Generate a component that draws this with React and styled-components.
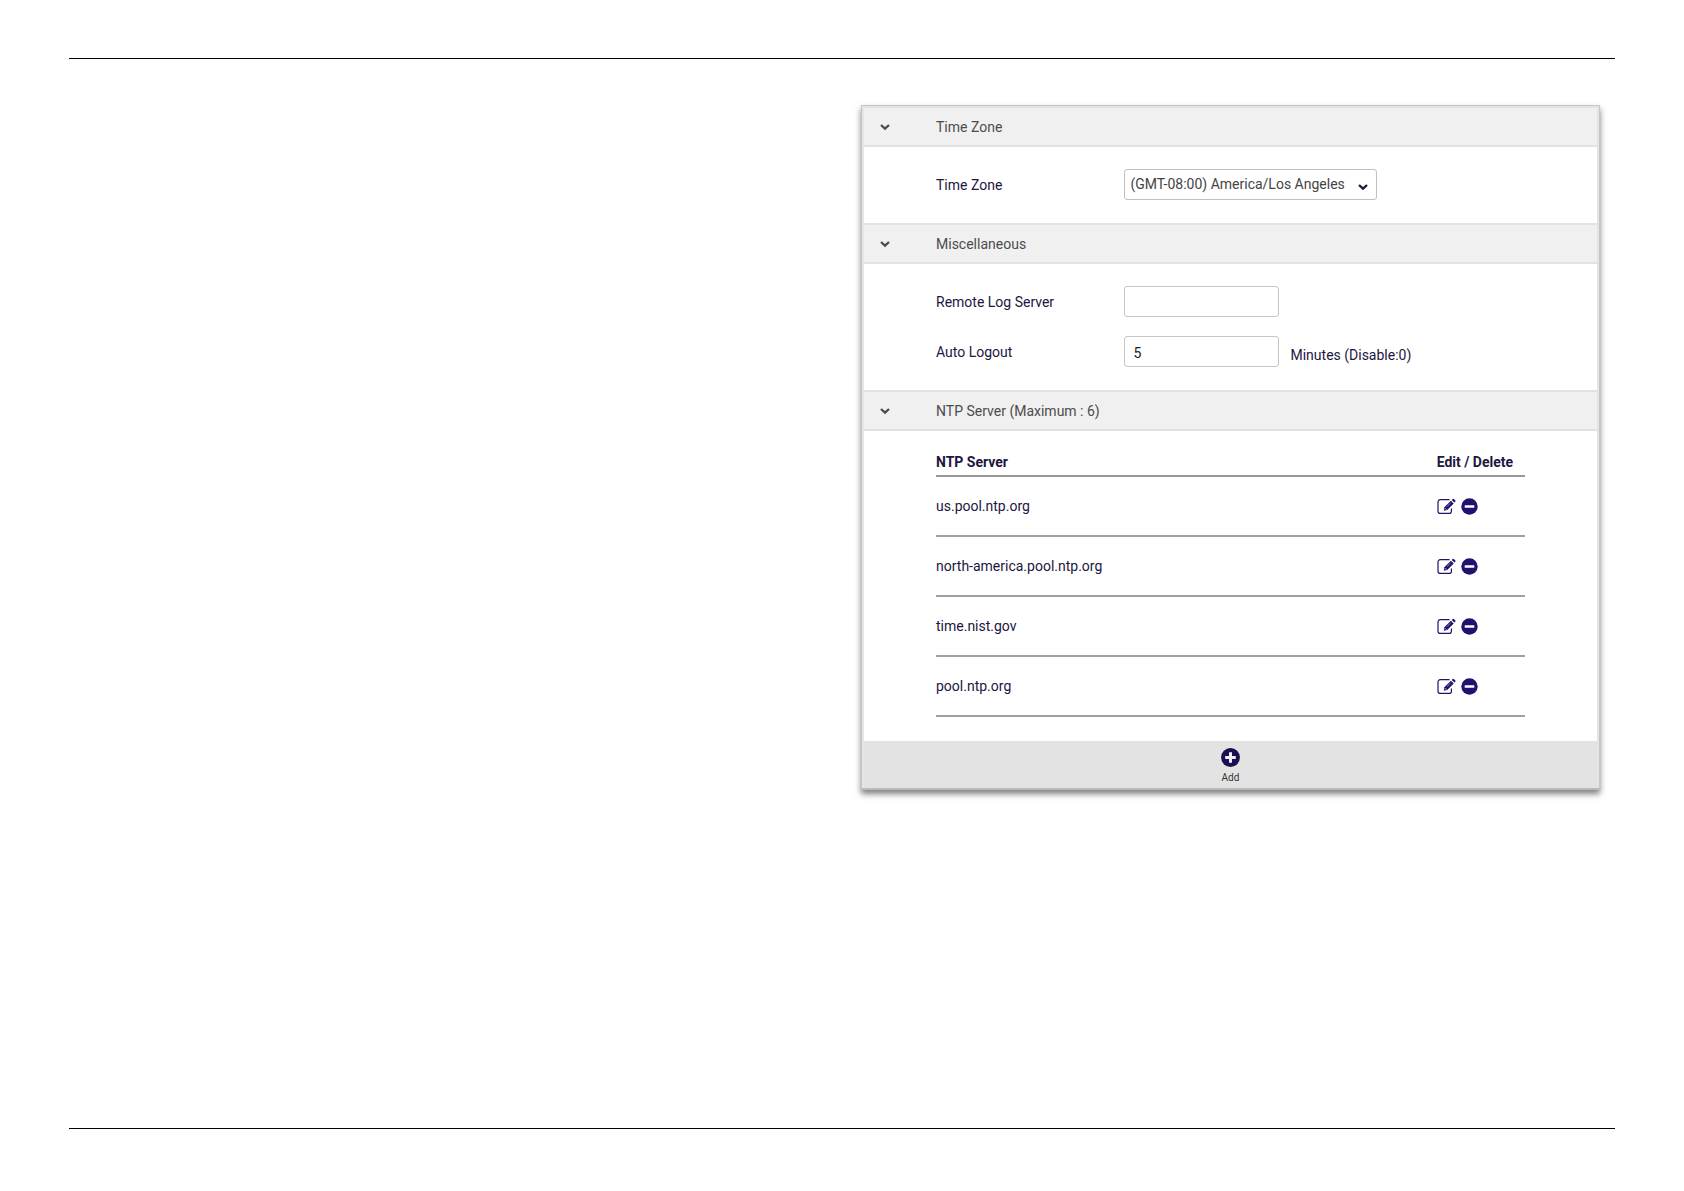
import React, {useState} from 'react';
import styled, {createGlobalStyle} from 'styled-components';


const GlobalStyle = createGlobalStyle`
  * {
    box-sizing: border-box;
  }

  body {
    margin: 0;
    background: #fff;
    color: #1d1640;
    font-family: Roboto, "Liberation Sans", sans-serif;
    font-size: 14px;
    line-height: 20px;
  }

  input, select, button {
    font: inherit;
    color: inherit;
  }
`

const Page = styled.div`
  min-height: 100vh;
  padding: 58px 69px 62px;
  display: flex;
  flex-direction: column;
`

const Sheet = styled.main`
  flex: 1;
  border-top: 1px solid #000;
  border-bottom: 1px solid #000;
  padding: 46px 15px 46px 0;
  display: grid;
  grid-template-columns: 1fr 1fr;
  column-gap: 53px;
  align-items: start;
`

const Panel = styled.form`
  grid-column: 2;
  padding: 0 2px;
  border: 1px solid #c6c6c6;
  border-bottom: 2px solid #bababa;
  background: #e4e4e4;
  box-shadow: 0 4px 6px rgba(0, 0, 0, 0.5);
`

const SectionHeader = styled.button`
  width: 100%;
  height: 41px;
  padding: 1px 16px 0;
  display: flex;
  align-items: center;
  gap: 46px;
  border: solid #e2e2e2;
  border-width: 2px 0;
  background: #f0f0f0;
  color: #4c4c4c;
  text-align: left;
  cursor: pointer;
`

const SectionBody = styled.div`
  padding: ${({$table}) => $table ? '19px 72px 24px' : '22px 72px 23px'};
  display: flex;
  flex-direction: column;
  gap: 19px;
  background: #fff;
`

const Field = styled.div`
  display: flex;
  align-items: center;
  height: 31px;
`

const Label = styled.label`
  flex: 0 0 32%;
`

const TextInput = styled.input`
  width: 155px;
  height: 31px;
  padding: 2px 8px 0;
  border: 1px solid #c6c6c6;
  border-radius: 3px;
  background: #fff;
  color: #222;
`

const Hint = styled.span`
  margin-left: 11px;
  padding-top: 6px;
`

const SelectBox = styled.div`
  position: relative;
  width: 253px;

  svg {
    position: absolute;
    right: 9px;
    top: 14px;
    pointer-events: none;
  }
`

const Select = styled.select`
  appearance: none;
  display: block;
  width: 100%;
  height: 31px;
  padding: 0 28px 1px 5px;
  border: 1px solid #c0c0c0;
  border-radius: 3px;
  background: #fff;
  color: #444;
`

const Table = styled.table`
  width: 100%;
  border-collapse: separate;
  border-spacing: 0;
  table-layout: fixed;
  text-align: left;

  th {
    height: 27px;
    padding: 2px 0 3px;
    border-bottom: 2px solid #989898;
    font-weight: 700;
  }

  th:first-child {
    width: 85%;
  }

  td {
    height: 60px;
    padding: 0;
    border-bottom: 2px solid #a0a0a0;
  }
`

const Actions = styled.div`
  display: flex;
  align-items: center;
  gap: 5px;
`

const IconButton = styled.button`
  display: flex;
  padding: 0;
  border: 0;
  background: none;
  color: #22126f;
  cursor: pointer;
`

const Footer = styled.div`
  height: 47px;
  background: #e3e3e3;
  display: flex;
  justify-content: center;
`

const AddButton = styled.button`
  padding: 7px 8px 0;
  display: flex;
  flex-direction: column;
  align-items: center;
  gap: 4px;
  border: 0;
  background: none;
  color: #333;
  font-size: 10px;
  line-height: 14px;
  cursor: pointer;

  svg {
    color: #1a0f50;
  }
`

const Chevron = () => (
  <svg width="10" height="8" viewBox="0 0 10 8" fill="none" aria-hidden="true">
    <path d="M1 2 L5 5.6 L9 2" stroke="currentColor" strokeWidth="2.3"/>
  </svg>
)

const EditIcon = () => (
  <svg width="19" height="17" viewBox="0 0 19 17" fill="none" aria-hidden="true">
    <path
      d="M12.5 1.7H3.2C1.9 1.7 1 2.6 1 3.9V13.2C1 14.5 1.9 15.4 3.2 15.4H12.2C13.5 15.4 14.4 14.5 14.4 13.2V10.6"
      stroke="currentColor"
      strokeWidth="1.2"
    />
    <path d="M13.9 2.7 L16.7 5.5 L10.3 12 L6.8 12.7 L7.4 9.2 Z" fill="currentColor"/>
    <path d="M14.7 2 L15.8 0.9 Q16.3 0.5 16.8 0.9 L18.4 2.5 Q18.8 3 18.4 3.5 L17.4 4.6 Z" fill="currentColor"/>
    <path d="M8 10.3 L9.3 11.6" stroke="#fff" strokeWidth="0.9"/>
    <path d="M10.2 8.4 L13.6 5" stroke="#fff" strokeWidth="0.5"/>
  </svg>
)

const MinusIcon = () => (
  <svg width="17" height="17" viewBox="0 0 17 17" aria-hidden="true">
    <circle cx="8.5" cy="8.5" r="8.2" fill="currentColor"/>
    <rect x="3.7" y="7.2" width="9.6" height="2.6" rx="0.5" fill="#fff"/>
  </svg>
)

const PlusIcon = () => (
  <svg width="19" height="19" viewBox="0 0 19 19" aria-hidden="true">
    <circle cx="9.5" cy="9.5" r="9.4" fill="currentColor"/>
    <path d="M9.5 4.2V14.8M4.2 9.5H14.8" stroke="#f0edf5" strokeWidth="3"/>
  </svg>
)

const Section = ({title, table, children}) => {
  let [open, setOpen] = useState(true)

  return (
    <section>
      <SectionHeader type="button" aria-expanded={open} onClick={() => setOpen(e => !e)}>
        <Chevron/>
        {title}
      </SectionHeader>
      {open && <SectionBody $table={table}>{children}</SectionBody>}
    </section>
  )
}

const App = () => {
  let [values, setValues] = useState({zone: 'la', logServer: '', logout: '5'})
  let [servers, setServers] = useState([
    'us.pool.ntp.org',
    'north-america.pool.ntp.org',
    'time.nist.gov',
    'pool.ntp.org',
  ])

  let onChange = (e) => setValues({...values, [e.target.name]: e.target.value})
  let removeServer = (name) => setServers(servers.filter(s => s !== name))

  return (
    <Page>
      <GlobalStyle/>
      <Sheet>
        <Panel onSubmit={(e) => e.preventDefault()}>
          <Section title="Time Zone">
            <Field>
              <Label htmlFor="zone">Time Zone</Label>
              <SelectBox>
                <Select id="zone" name="zone" value={values.zone} onChange={onChange}>
                  <option value="la">(GMT-08:00) America/Los Angeles</option>
                </Select>
                <Chevron/>
              </SelectBox>
            </Field>
          </Section>

          <Section title="Miscellaneous">
            <Field>
              <Label htmlFor="logServer">Remote Log Server</Label>
              <TextInput id="logServer" name="logServer" value={values.logServer} onChange={onChange}/>
            </Field>
            <Field>
              <Label htmlFor="logout">Auto Logout</Label>
              <TextInput id="logout" name="logout" value={values.logout} onChange={onChange}/>
              <Hint>Minutes (Disable:0)</Hint>
            </Field>
          </Section>

          <Section title="NTP Server (Maximum : 6)" table>
            <Table>
              <thead>
                <tr>
                  <th>NTP Server</th>
                  <th>Edit / Delete</th>
                </tr>
              </thead>
              <tbody>
                {servers.map(name => (
                  <tr key={name}>
                    <td>{name}</td>
                    <td>
                      <Actions>
                        <IconButton type="button" aria-label="Edit">
                          <EditIcon/>
                        </IconButton>
                        <IconButton type="button" aria-label="Delete" onClick={() => removeServer(name)}>
                          <MinusIcon/>
                        </IconButton>
                      </Actions>
                    </td>
                  </tr>
                ))}
              </tbody>
            </Table>
          </Section>

          <Footer>
            <AddButton type="button">
              <PlusIcon/>
              Add
            </AddButton>
          </Footer>
        </Panel>
      </Sheet>
    </Page>
  );
};

export default App;
